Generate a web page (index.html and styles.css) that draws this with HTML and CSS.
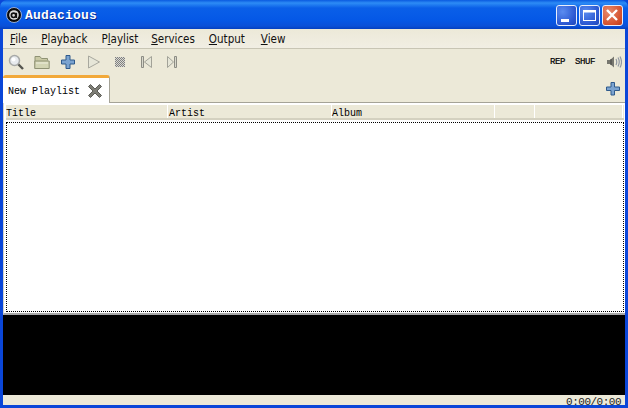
FILE: index.html
```html
<!DOCTYPE html>
<html lang="en">
<head>
<meta charset="utf-8">
<title>Audacious</title>
<link rel="stylesheet" href="styles.css">
</head>
<body>
<div class="window">
  <header class="titlebar">
    <svg class="logo" width="16" height="16" viewBox="0 0 16 16"><circle cx="8" cy="8" r="7.5" fill="#0a0a0a" stroke="#b8c8e8" stroke-width=".8"/><circle cx="8" cy="8" r="4.8" fill="#dcdcdc"/><circle cx="7.600" cy="8.300" r="2.200" fill="none" stroke="#111" stroke-width="1.700"/><path d="M10.300 5.800v5.200" stroke="#111" stroke-width="1.600"/></svg>
    <span class="title-text">Audacious</span>
    <div class="win-buttons">
      <span class="win-btn"><svg width="21" height="21" viewBox="0 0 21 21"><rect x="5" y="14" width="8" height="3" fill="#fff"/></svg></span>
      <span class="win-btn"><svg width="21" height="21" viewBox="0 0 21 21"><rect x="4.500" y="5.500" width="12" height="10" fill="none" stroke="#fff"/><rect x="4" y="5" width="13" height="2.500" fill="#fff"/></svg></span>
      <span class="win-btn close"><svg width="21" height="21" viewBox="0 0 21 21"><path d="M5 5l10 10M15 5L5 15" stroke="#fff" stroke-width="2.400"/></svg></span>
    </div>
  </header>
  <div class="client">
    <nav class="menubar">
      <span><u>F</u>ile</span><span><u>P</u>layback</span><span>P<u>l</u>aylist</span><span><u>S</u>ervices</span><span><u>O</u>utput</span><span><u>V</u>iew</span>
    </nav>
    <div class="toolbar">
      <svg class="tool" width="16" height="16" viewBox="0 0 16 16"><path d="M10 10l5 5" stroke="#55554f" stroke-width="2.400"/><circle cx="6.500" cy="6.500" r="5" fill="#e8ebee" stroke="#a8aaa8" stroke-width="1.500"/><circle cx="5.500" cy="5.500" r="2" fill="#fff"/></svg>
      <svg class="tool" width="16" height="16" viewBox="0 0 16 16"><path d="M1 14.500V2.500h5l1.500 2h6v2" fill="#c9c9a4" stroke="#8f9274"/><path d="M.8 14.500V7h14.400v7.500z" fill="#d3d5b4" stroke="#8f9274"/><path d="M2 9h12" stroke="#eeeedd"/></svg>
      <svg class="tool" width="16" height="16" viewBox="0 0 16 16"><path d="M6 1.500h4v4.500h4.500v4H10v4.500H6V10H1.500V6H6z" fill="#7ba3d0" stroke="#2f5a8c"/></svg>
      <svg class="tool" width="16" height="16" viewBox="0 0 16 16"><path d="M2.500 2v12l11-6z" fill="#e6e6d8" stroke="#a8a89e"/></svg>
      <svg class="tool" width="16" height="16" viewBox="0 0 16 16"><defs><pattern id="dots" width="2" height="2" patternUnits="userSpaceOnUse"><rect width="2" height="2" fill="#d8d8d2"/><rect width="1" height="1" fill="#808080"/><rect x="1" y="1" width="1" height="1" fill="#808080"/></pattern></defs><rect x="3" y="3" width="10" height="10" fill="url(#dots)"/></svg>
      <svg class="tool" width="16" height="16" viewBox="0 0 16 16"><path d="M3.500 2.500h2v11h-2z" fill="#d8d8cc" stroke="#8c8c84"/><path d="M13.500 2.500v11L6.500 8z" fill="#e6e6d8" stroke="#a2a298"/></svg>
      <svg class="tool" width="16" height="16" viewBox="0 0 16 16"><path d="M10.500 2.500h2v11h-2z" fill="#d8d8cc" stroke="#8c8c84"/><path d="M3.500 2.500v11L9.500 8z" fill="#e6e6d8" stroke="#a2a298"/></svg>
      <span class="toggles"><span>REP</span><span>SHUF</span></span>
      <svg width="16" height="16" viewBox="0 0 16 16"><path d="M1 6h3l4-3.500v11L4 10H1z" fill="#77776f"/><path d="M5 5v6" stroke="#444"/><path d="M10 5q1.500 3 0 6M12 3.500q2.500 4.500 0 9M14 2.500q3 5.500 0 11" fill="none" stroke="#8f96a0" stroke-width="1.200"/></svg>
    </div>
    <div class="tabrow">
      <div class="tab">
        <span>New Playlist</span>
        <svg width="16" height="16" viewBox="0 0 16 16"><path d="M1.500 3.500l2-2L8 6l4.500-4.500 2 2L10 8l4.500 4.500-2 2L8 10l-4.500 4.500-2-2L6 8z" fill="#7d7d75" stroke="#5c5c56"/></svg>
      </div>
      <svg class="tab-add" width="16" height="16" viewBox="0 0 16 16"><path d="M6 1.500h3.500v4.500h5v3.500h-5V14H6V9.500H1.500V6H6z" fill="#7ba3d0" stroke="#2f5a8c"/></svg>
    </div>
    <div class="playlist">
      <div class="columns">
        <span>Title</span><span>Artist</span><span>Album</span><span></span><span></span>
      </div>
      <div class="rows"></div>
    </div>
    <div class="visualizer"></div>
    <footer class="statusbar">0:00/0:00</footer>
  </div>
</div>
</body>
</html>
```
FILE: styles.css
```css
* { box-sizing: border-box; }
html, body { margin: 0; padding: 0; }
body { width: 628px; height: 408px; overflow: hidden; background: #ece9d8; }
.window {
  width: 628px; height: 408px;
  display: flex; flex-direction: column;
  background: #0a46d8;
  padding: 0 3px 3px;
}
.titlebar {
  height: 29px; flex: none;
  margin: 0 -3px;
  padding: 2px 5px 0 6px;
  display: flex; align-items: center;
  background: linear-gradient(#0a5ae0 0, #2d8cf5 3px, #0a5fe8 8px, #0558e6 20px, #0a50d8 26px, #0440c0 29px);
  border-radius: 7px 7px 0 0;
}
.logo { flex: none; margin-right: 3px; margin-top: -2px; }
.title-text {
  font: bold 13px "Liberation Mono", monospace;
  color: #fff; letter-spacing: .2px;
  text-shadow: 1px 1px 0 #0a2a90;
}
.win-buttons { margin-left: auto; display: flex; gap: 2px; margin-top: -1px; }
.win-btn {
  width: 21px; height: 21px; display: block;
  border: 1px solid #e8eefc; border-radius: 3px;
  background: radial-gradient(circle at 30% 30%, #5a8cf0, #2a56d0 70%, #2048b8);
}
.win-btn svg { display: block; margin: -1px; }
.win-btn.close { background: radial-gradient(circle at 30% 30%, #e88a6c, #d4502c 70%, #b83a1c); }
.client {
  flex: 1; min-height: 0;
  display: flex; flex-direction: column;
  background: #ece9d8;
}
.menubar {
  height: 20px; flex: none;
  padding: 1px 0 0 7px;
  display: flex; align-items: center; gap: 14px;
  font: 11.5px "DejaVu Sans Condensed", "DejaVu Sans", sans-serif; color: #111;
  background: linear-gradient(#ece9d8, #f1eee3);
  border-bottom: 1px solid #c8c5b4;
}
.menubar span:nth-child(3) { margin-right: -1px; }
.menubar span:nth-child(5) { margin-right: 2px; }
.toolbar {
  height: 26px; flex: none;
  padding: 0 3px 0 5px;
  display: flex; align-items: center; gap: 10px;
}
.tool { flex: none; }
.toggles {
  margin-left: auto; margin-right: 1px;
  display: flex; gap: 10px;
  font: 9px "Liberation Mono", monospace; color: #000;
  letter-spacing: -.4px;
  -webkit-text-stroke: .2px #000;
}
.tabrow {
  height: 28px; flex: none;
  display: flex; align-items: flex-end;
  border-bottom: 1px solid #a5a397;
}
.tab {
  width: 107px; height: 28px; margin-bottom: -1px;
  padding: 1px 0 0 5px;
  display: flex; align-items: center; gap: 7px;
  font: 10px "Liberation Mono", monospace; color: #000;
  background: #fff;
  border-top: 3px solid #f2a93a;
  border-right: 1px solid #a5a397;
  border-radius: 3px 3px 0 0;
}
.tab-add { margin-left: auto; margin-right: 4px; margin-bottom: 5px; }
.playlist {
  flex: 1; min-height: 0;
  display: flex; flex-direction: column;
  background: #fff;
  padding: 2px 1px 0 1px;
  border-left: 1px solid #d6d4c8;
  border-bottom: 2px solid #a8a8a8;
}
.columns {
  height: 15px; flex: none;
  margin-left: 1px;
  display: grid;
  grid-template-columns: 162px 164px 163px 40px 88px;
  font: 10px/17px "Liberation Mono", monospace; color: #000;
  background: #ece9d8;
  border-bottom: 2px solid #d4d1c0;
}
.columns span { border-right: 1px solid #fff; height: 13px; }
.columns span:nth-child(2) { padding-left: 1px; }
.rows {
  flex: 1;
  margin: 2px 0 1px 1px;
  border: 1px dotted #000;
}
.visualizer { height: 80px; flex: none; background: #000; }
.statusbar {
  height: 10px; flex: none;
  padding-right: 4px;
  text-align: right;
  font: 11px/15px "Liberation Mono", monospace; color: #222;
  letter-spacing: -.5px;
}
```
